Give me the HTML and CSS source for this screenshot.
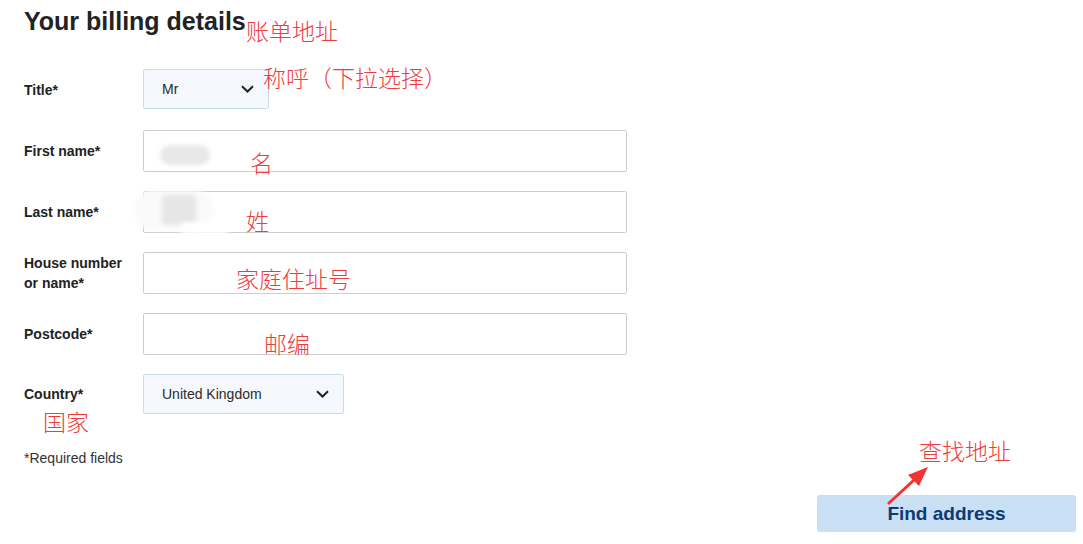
FILE: index.html
```html
<!DOCTYPE html>
<html lang="en">
<head>
<meta charset="utf-8">
<title>Your billing details</title>
<link rel="stylesheet" href="styles.css">
</head>
<body>
<div class="page">
  <h1 class="heading">Your billing details</h1>

  <form class="form">
    <div class="row">
      <label class="label label-title">Title*</label>
      <div class="select select-title">
        <span class="select-value">Mr</span>
        <svg class="chevron" width="13" height="8" viewBox="0 0 13 8"><path d="M1 1.2 L6.5 6.5 L12 1.2" fill="none" stroke="#222" stroke-width="2"/></svg>
      </div>
    </div>
    <div class="row row-first">
      <label class="label">First name*</label>
      <div class="input"></div>
    </div>
    <div class="row">
      <label class="label">Last name*</label>
      <div class="input"></div>
    </div>
    <div class="row">
      <label class="label">House number<br>or name*</label>
      <div class="input"></div>
    </div>
    <div class="row">
      <label class="label">Postcode*</label>
      <div class="input"></div>
    </div>
    <div class="row">
      <label class="label">Country*</label>
      <div class="select select-country">
        <span class="select-value">United Kingdom</span>
        <svg class="chevron" width="13" height="8" viewBox="0 0 13 8"><path d="M1 1.2 L6.5 6.5 L12 1.2" fill="none" stroke="#222" stroke-width="2"/></svg>
      </div>
    </div>
    <p class="required">*Required fields</p>
    <div class="actions">
      <button type="button" class="btn">Find address</button>
    </div>
  </form>

  <div class="blur blur-a"></div>
  <div class="blur blur-b"></div>
  <div class="blur blur-c"></div>
  <div class="blur blur-d"></div>

  <span class="note note-1">账单地址</span>
  <span class="note note-2">称呼（下拉选择）</span>
  <span class="note note-3">名</span>
  <span class="note note-4">姓</span>
  <span class="note note-5">家庭住址号</span>
  <span class="note note-6">邮编</span>
  <span class="note note-7">国家</span>
  <span class="note note-8">查找地址</span>
  <svg class="arrow" width="60" height="50" viewBox="0 0 60 50">
    <path d="M4 44 L30 20" stroke="#f03434" stroke-width="3" fill="none"/>
    <path d="M44 7 L24 15 L35 26 Z" fill="#f03434"/>
  </svg>
</div>
</body>
</html>
```

FILE: styles.css
```css
html, body {
  margin: 0;
  padding: 0;
  background: #fff;
}

body {
  font-family: "Liberation Sans", Arial, sans-serif;
  color: #222;
}

.page {
  position: relative;
  width: 1083px;
  height: 544px;
  box-sizing: border-box;
  padding: 7px 7px 0 24px;
}

.heading {
  margin: 0;
  font-size: 25px;
  line-height: 28px;
  font-weight: 700;
  color: #222;
}

.form {
  display: flex;
  flex-direction: column;
  margin-top: 34px;
}

.row {
  display: flex;
  align-items: center;
  margin-bottom: 19px;
}

.row-first {
  margin-top: 2px;
}

.label {
  width: 119px;
  flex: none;
  font-size: 14px;
  line-height: 20px;
  font-weight: 700;
  color: #222;
}

.label-title {
  padding-top: 2px;
}

.input {
  width: 484px;
  height: 42px;
  box-sizing: border-box;
  border: 1px solid #cdcdcd;
  border-radius: 2px;
  background: #fff;
}

.select {
  height: 40px;
  box-sizing: border-box;
  border: 1px solid #c9dcee;
  border-radius: 2px;
  background: #f5f8fc;
  display: flex;
  align-items: center;
  justify-content: space-between;
  padding: 0 14px 0 18px;
}

.select-title {
  width: 126px;
}

.select-country {
  width: 201px;
}

.select-value {
  font-size: 14px;
  color: #2b2b2b;
}

.chevron {
  display: block;
}

.required {
  margin: 15px 0 0;
  font-size: 14px;
  line-height: 20px;
  color: #333;
}

.actions {
  display: flex;
  justify-content: flex-end;
  margin-top: 27px;
}

.btn {
  width: 259px;
  height: 37px;
  border: none;
  border-radius: 3px;
  background: #c9dff3;
  color: #0c3b74;
  font-family: "Liberation Sans", Arial, sans-serif;
  font-size: 19px;
  font-weight: 700;
  padding: 0;
  line-height: 37px;
}

/* blurred redactions */
.blur {
  position: absolute;
  border-radius: 12px;
  filter: blur(2px);
}

.blur-a {
  left: 160px;
  top: 145px;
  width: 50px;
  height: 20px;
  background: #e8e8e8;
}

.blur-b {
  left: 134px;
  top: 190px;
  width: 80px;
  height: 40px;
  background: #fafafa;
  border-radius: 20px;
}

.blur-c {
  left: 162px;
  top: 195px;
  width: 34px;
  height: 30px;
  background: #e6e6e6;
  border-radius: 4px;
}

.blur-d {
  left: 180px;
  top: 222px;
  width: 50px;
  height: 12px;
  background: #fff;
}

/* annotations */
.note {
  position: absolute;
  font-family: "Noto Sans CJK SC", sans-serif;
  font-weight: 300;
  font-size: 23px;
  line-height: 1;
  color: #f03c3c;
  white-space: nowrap;
}

.note-1 { left: 246px; top: 19px; }
.note-2 { left: 263px; top: 66px; }
.note-3 { left: 250px; top: 151px; }
.note-4 { left: 246px; top: 209px; }
.note-5 { left: 236px; top: 267px; }
.note-6 { left: 264px; top: 332px; }
.note-7 { left: 43px; top: 410px; }
.note-8 { left: 919px; top: 439px; }

.arrow {
  position: absolute;
  left: 884px;
  top: 460px;
}
```
